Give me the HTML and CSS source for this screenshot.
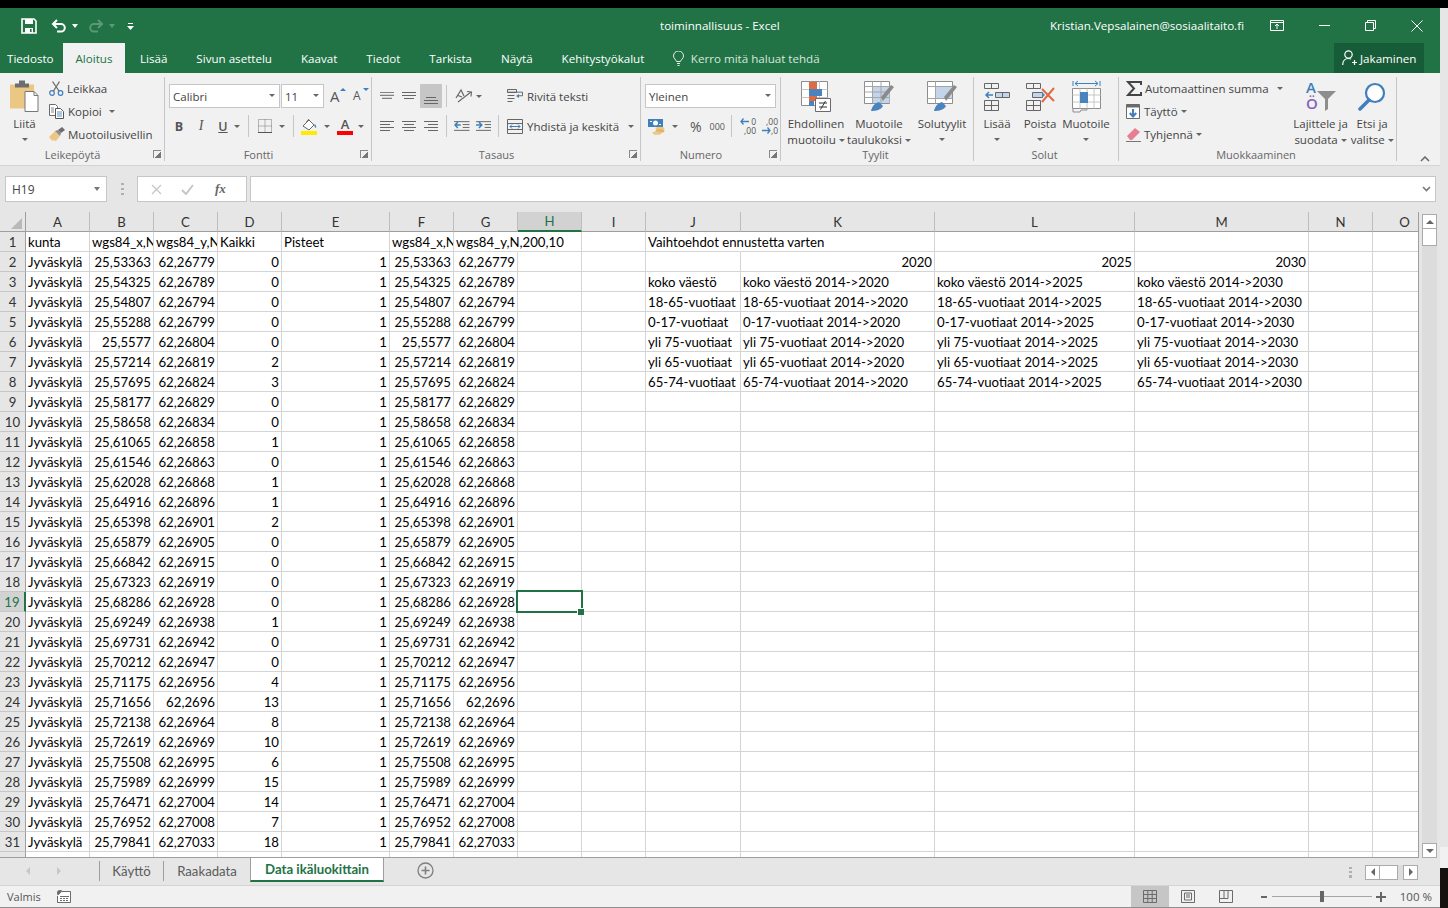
FILE: index.html
```html
<!DOCTYPE html>
<html lang="fi">
<head>
<meta charset="utf-8">
<title>toiminnallisuus - Excel</title>
<link rel="stylesheet" href="styles.css">
</head>
<body>
<div class="topgap"></div>
<div class="screen">
<div class="window">

<header class="titlebar">
  <div class="qat">
    <svg class="q-save" width="16" height="16" viewBox="0 0 16 16"><path d="M1 1h12l2 2v12H1z" fill="none" stroke="#fff" stroke-width="1.6"/><path d="M4 1h8v5H4z" fill="#fff"/><path d="M4 10h8v5H4z" fill="#fff"/><path d="M9 11h1.6v3H9z" fill="#217346"/></svg>
    <svg class="q-undo" width="16" height="14" viewBox="0 0 16 14"><path d="M2 5h8a3.6 3.6 0 0 1 0 7.6H6" fill="none" stroke="#fff" stroke-width="2"/><path d="M6 1 2 5l4 4" fill="none" stroke="#fff" stroke-width="2"/></svg>
    <i class="caret white q-c1"></i>
    <svg class="q-redo" width="16" height="14" viewBox="0 0 16 14"><path d="M14 5H6a3.6 3.6 0 0 0 0 7.6h4" fill="none" stroke="#5d9878" stroke-width="2"/><path d="m10 1 4 4-4 4" fill="none" stroke="#5d9878" stroke-width="2"/></svg>
    <i class="caret dim q-c2"></i>
    <svg class="q-more" width="7" height="8" viewBox="0 0 7 8"><path d="M1 1h5v1H1z" fill="#fff"/><path d="M0 4h7L3.500 8z" fill="#fff"/></svg>
  </div>
  <div class="doc-title">toiminnallisuus - Excel</div>
  <div class="win-right">
    <span class="account">Kristian.Vepsalainen@sosiaalitaito.fi</span>
    <svg class="w-disp" width="14" height="11" viewBox="0 0 14 11"><path d="M.5.500h13v10H.5zM.5 2.500h13" fill="none" stroke="#fff"/><path d="M7 9V4.500M5 6l2-2 2 2" fill="none" stroke="#fff"/></svg>
    <svg class="w-min" width="11" height="11" viewBox="0 0 11 11"><path d="M0 5.500h11" stroke="#fff"/></svg>
    <svg class="w-max" width="11" height="11" viewBox="0 0 11 11"><path d="M.5 2.500h8v8h-8zM2.500 2.500v-2h8v8h-2" fill="none" stroke="#fff"/></svg>
    <svg class="w-close" width="12" height="12" viewBox="0 0 12 12"><path d="m.5.500 11 11M11.500.500l-11 11" stroke="#fff"/></svg>
  </div>
</header>

<nav class="tabs">
  <span class="tab t-file">Tiedosto</span>
  <span class="tab active">Aloitus</span>
  <span class="tab">Lisää</span>
  <span class="tab">Sivun asettelu</span>
  <span class="tab">Kaavat</span>
  <span class="tab">Tiedot</span>
  <span class="tab">Tarkista</span>
  <span class="tab">Näytä</span>
  <span class="tab">Kehitystyökalut</span>
  <span class="tell">
    <svg width="11" height="15" viewBox="0 0 11 15"><path d="M3.500 10.500C3 8.500.5 7.500.5 5a5 5 0 0 1 10 0c0 2.500-2.500 3.500-3 5.500zM4 12.500h3M4.500 14.500h2" fill="none" stroke="#e6efe9"/></svg>
    Kerro mitä haluat tehdä
  </span>
  <span class="share">
    <svg width="15" height="16" viewBox="0 0 15 16"><circle cx="6.500" cy="4.500" r="3.700" fill="none" stroke="#fff" stroke-width="1.200"/><path d="M.7 15c0-4 2.500-6.500 5.800-6.500 1 0 1.800.2 2.500.6M10 12.500h5M12.500 10v5" fill="none" stroke="#fff" stroke-width="1.200"/></svg>
    Jakaminen
  </span>
</nav>

<section class="ribbon">

  <div class="group g-clip">
    <div class="g-body">
      <div class="big b-paste">
        <svg width="30" height="32" viewBox="0 0 30 32"><path d="M0 4h24v24H0z" fill="#ecc683"/><path d="M5 3h4V0h6v3h4v4H5z" fill="#6d6d6d"/><path d="M15 11h9l4 4v16H15z" fill="#fff" stroke="#777"/><path d="M24 11v4h4" fill="none" stroke="#777"/></svg>
        <span>Liitä</span><i class="caret"></i>
      </div>
      <div class="stack s-clip">
        <div class="row"><svg width="15" height="15" viewBox="0 0 15 15"><circle cx="3" cy="12" r="2.300" fill="none" stroke="#3f7fbb" stroke-width="1.200"/><circle cx="11.500" cy="12" r="2.300" fill="none" stroke="#3f7fbb" stroke-width="1.200"/><path d="m4.500 10 6-9.500M10 10 3.500.5" stroke="#6b6b6b" stroke-width="1.300"/></svg><span>Leikkaa</span></div>
        <div class="row"><svg width="16" height="15" viewBox="0 0 16 15"><path d="M.5.500h6l2 2v9h-8z" fill="#fff" stroke="#6b6b6b"/><path d="M6.500 4.500h5l3 3v7h-8z" fill="#fff" stroke="#555"/><path d="M8 8h5M8 10h5M8 12h5" stroke="#5b8fc0"/><path d="M2 4h3M2 6h3M2 8h3" stroke="#888"/></svg><span>Kopioi</span><i class="caret c-kop"></i></div>
        <div class="row"><svg width="16" height="15" viewBox="0 0 16 15"><path d="M0 10 6 4l5 5-4 5c-2 0-2-1-3-1l-1 1c-1-2-2-3-3-4z" fill="#ecc683"/><path d="m6 4 3-1 3 3-1 3z" fill="#8a8a8a"/><path d="m9 3 4-3 3 3-4 3z" fill="#6d6d6d"/></svg><span>Muotoilusivellin</span></div>
      </div>
    </div>
    <div class="g-label"><span>Leikepöytä</span><i class="launch"></i></div>
  </div>

  <div class="group g-font">
    <div class="g-body two">
      <div class="row2 r-font1">
        <span class="combo c-name">Calibri<i class="caret"></i></span>
        <span class="combo c-size">11<i class="caret"></i></span>
        <span class="fs-btn fs-up">A<i class="tip"></i></span>
        <span class="fs-btn fs-down">A<i class="tip down"></i></span>
      </div>
      <div class="row2 r-font2">
        <b class="fmt f-b">B</b><em class="fmt f-i">I</em><u class="fmt f-u">U</u><i class="caret c-u"></i>
        <i class="vsep v1"></i>
        <svg class="i-bord" width="14" height="14" viewBox="0 0 14 14"><path d="M.5.500h13v13H.5zM7 .5v13M.5 7h13" fill="none" stroke="#777" stroke-dasharray="1 1"/><path d="M0 13.500h14" stroke="#555"/></svg><i class="caret c-b"></i>
        <i class="vsep v2"></i>
        <svg class="i-fill" width="17" height="17" viewBox="0 0 17 17"><path d="m2 8 6-6 5 5-5 5z" fill="#fff" stroke="#666"/><path d="M8 1 5.500 4" stroke="#666"/><path d="M13.500 6c1.500 1 2 2.500 1.500 4-1-.5-2-1.500-1.500-4z" fill="#3f7fbb"/><path d="M0 13h16v4H0z" fill="#ffeb00"/></svg><i class="caret c-f"></i>
        <span class="fontcolor">A</span><i class="caret c-c"></i>
      </div>
    </div>
    <div class="g-label"><span>Fontti</span><i class="launch"></i></div>
  </div>

  <div class="group g-align">
    <div class="g-body two">
      <div class="row2 r-al1">
        <svg class="i-al" width="14" height="8" viewBox="0 0 14 8"><path d="M0 .5h14M0 3.500h14M2 6.500h10" stroke="#666" transform="translate(0 -.2)"/></svg>
        <svg class="i-al a2" width="14" height="8" viewBox="0 0 14 8"><path d="M0 .5h14M0 3.500h14M2 6.500h10" stroke="#666"/></svg>
        <span class="al-on"><svg width="14" height="8" viewBox="0 0 14 8"><path d="M2 .5h10M0 3.500h14M0 6.500h14" stroke="#666"/></svg></span>
        <i class="vsep v3"></i>
        <svg class="i-ori" width="18" height="16" viewBox="0 0 18 16"><path d="m1 10 5-8 3 6M3 7.500l4 1.500" fill="none" stroke="#666" stroke-width="1.200"/><path d="M3 14 16 4M12 3.500l4.500.5-.5 4.500" fill="none" stroke="#666" stroke-width="1.100"/></svg><i class="caret c-o"></i>
      </div>
      <div class="row2 r-al2">
        <svg class="i-al" width="14" height="10" viewBox="0 0 14 10"><path d="M0 .5h14M0 3.500h10M0 6.500h14M0 9.500h10" stroke="#666"/></svg>
        <svg class="i-al a2" width="14" height="10" viewBox="0 0 14 10"><path d="M0 .5h14M2 3.500h10M0 6.500h14M2 9.500h10" stroke="#666"/></svg>
        <svg class="i-al a3" width="14" height="10" viewBox="0 0 14 10"><path d="M0 .5h14M4 3.500h10M0 6.500h14M4 9.500h10" stroke="#666"/></svg>
        <i class="vsep v4"></i>
        <svg class="i-ind" width="16" height="12" viewBox="0 0 16 12"><path d="M0 .5h16M9 3.500h7M9 6.500h7M0 9.500h16" stroke="#666" transform="translate(0 1)"/><path d="M7 5H1m3-3L1 5l3 3" fill="none" stroke="#3f7fbb" stroke-width="1.500"/></svg>
        <svg class="i-ind2" width="16" height="12" viewBox="0 0 16 12"><path d="M0 .5h16M9 3.500h7M9 6.500h7M0 9.500h16" stroke="#666" transform="translate(0 1)"/><path d="M0 5h6M3 2l3 3-3 3" fill="none" stroke="#3f7fbb" stroke-width="1.500"/></svg>
        <i class="vsep v5"></i>
      </div>
      <div class="al-text">
        <div class="row"><svg width="16" height="15" viewBox="0 0 16 15"><path d="M.5.500h9v3h-9zM.5 6.500h7M.5 9.500h7M.5 12.500h5" fill="none" stroke="#666"/><path d="M0 3.500h15v4h-4" fill="none" stroke="#666" transform="translate(.5 0) scale(1 .9)"/><path d="m9 7 3-2v4z" fill="#3f7fbb"/></svg><span>Rivitä teksti</span></div>
        <div class="row"><svg width="16" height="15" viewBox="0 0 16 15"><path d="M.5.500h15v14H.5zM.5 4.500h15M.5 10.500h15" fill="none" stroke="#666"/><path d="M3 7.500h10" stroke="#3f7fbb"/><path d="M5 5.500 3 7.500l2 2M11 5.500l2 2-2 2" fill="none" stroke="#3f7fbb"/></svg><span>Yhdistä ja keskitä</span><i class="caret c-m"></i></div>
      </div>
    </div>
    <div class="g-label"><span>Tasaus</span><i class="launch"></i></div>
  </div>

  <div class="group g-num">
    <div class="g-body two">
      <div class="row2 r-n1"><span class="combo c-gen">Yleinen<i class="caret"></i></span></div>
      <div class="row2 r-n2">
        <svg class="i-cur" width="18" height="17" viewBox="0 0 18 17"><path d="M0 1h15v8H0z" fill="#3f7fbb"/><circle cx="7.500" cy="5" r="2.500" fill="#fff"/><path d="M2 3h2v1H2zM11 6h2v1h-2z" fill="#fff"/><ellipse cx="12" cy="10.500" rx="4.500" ry="1.800" fill="#ecc683"/><ellipse cx="12" cy="13" rx="4.500" ry="1.800" fill="#e2b35c"/><ellipse cx="9" cy="15" rx="4.500" ry="1.800" fill="#ecc683"/></svg><i class="caret c-cu"></i>
        <span class="pct">%</span><span class="thou">000</span>
        <i class="vsep v6"></i>
        <span class="dec d1"><svg width="9" height="7" viewBox="0 0 9 7"><path d="M9 3.500H1m2.500-3L1 3.500l2.500 3" fill="none" stroke="#3f7fbb" stroke-width="1.300"/></svg><b>0</b><b class="dl">,00</b></span>
        <span class="dec d2"><b class="dt">,00</b><svg width="9" height="7" viewBox="0 0 9 7"><path d="M0 3.500h8M5.500.5l2.500 3-2.500 3" fill="none" stroke="#3f7fbb" stroke-width="1.300"/></svg><b>,0</b></span>
      </div>
    </div>
    <div class="g-label"><span>Numero</span><i class="launch"></i></div>
  </div>

  <div class="group g-styles">
    <div class="g-body">
      <div class="big b-cf">
        <svg width="31" height="31" viewBox="0 0 31 31"><path d="M.5.500h26v24H.5z" fill="#fff" stroke="#8d8d8d"/><path d="M.5 8.500h26M.5 16.500h26M9.500.5v24M18.500.5v24" stroke="#c6c6c6"/><path d="M8 1h8v7H8z" fill="#df6a43"/><path d="M8 8h13v7H8z" fill="#4b83bf"/><path d="M8 15h8v5H8z" fill="#df6a43"/><path d="M8 20h5v5H8z" fill="#4b83bf"/><path d="M14.500 17.500h15v13h-15z" fill="#fff" stroke="#6b6b6b"/><path d="M18 22h8M18 26h8M24.500 20l-5 8.500" stroke="#333"/></svg>
        <span>Ehdollinen</span><span>muotoilu<i class="caret in"></i></span>
      </div>
      <div class="big b-ft">
        <svg width="31" height="31" viewBox="0 0 31 31"><path d="M.5.500h25v22H.5z" fill="#fff" stroke="#8d8d8d"/><path d="M8.500 5h17v17h-17z" fill="#c3d5ea"/><path d="M.5 5.500h25M.5 11h25M.5 16.500h25M8.500.5v22M17 .5v22" stroke="#a5a5a5"/><path d="m19 20 11-14-3-2-10 12z" fill="#8a8a8a"/><path d="M7 30c1-5 4-8 8-9l4 4c-2 4-7 5-12 5z" fill="#4b83bf"/></svg>
        <span>Muotoile</span><span>taulukoksi<i class="caret in"></i></span>
      </div>
      <div class="big b-cs">
        <svg width="31" height="31" viewBox="0 0 31 31"><path d="M.5.500h25v22H.5z" fill="#fff" stroke="#8d8d8d"/><path d="M8 6h17v11H8z" fill="#c3d5ea"/><path d="M.5 5.500h25M.5 17.500h25M8.500.5v22" stroke="#a5a5a5"/><path d="m19 20 11-14-3-2-10 12z" fill="#8a8a8a"/><path d="M7 30c1-5 4-8 8-9l4 4c-2 4-7 5-12 5z" fill="#4b83bf"/></svg>
        <span>Solutyylit</span><i class="caret"></i>
      </div>
    </div>
    <div class="g-label plain"><span>Tyylit</span></div>
  </div>

  <div class="group g-cells">
    <div class="g-body">
      <div class="big b-ins">
        <svg width="28" height="31" viewBox="0 0 28 31"><path d="M1.500 2.500h14v5h-14zM8.500 2.500v5M1.500 19.500h14v10h-14zM1.500 24.500h14M8.500 19.500v10" fill="none" stroke="#666"/><path d="M12.500 11.500h14v5h-14zM19.500 11.500v5" fill="#c3d5ea" stroke="#666"/><path d="M10 14H3m3-3-3 3 3 3" fill="none" stroke="#3f7fbb" stroke-width="1.500"/></svg>
        <span>Lisää</span><i class="caret"></i>
      </div>
      <div class="big b-del">
        <svg width="31" height="31" viewBox="0 0 31 31"><path d="M1.500 2.500h14v5h-14zM8.500 2.500v5M1.500 19.500h14v10h-14zM1.500 24.500h14M8.500 19.500v10" fill="none" stroke="#666"/><path d="M7.500 11.500h10v5h-10z" fill="#c3d5ea" stroke="#666"/><path d="m17 11 3 3-3 3z" fill="#4b83bf"/><path d="m17 8 12 12M29 7 17 21" stroke="#df6a43" stroke-width="2"/></svg>
        <span>Poista</span><i class="caret"></i>
      </div>
      <div class="big b-fmt">
        <svg width="29" height="33" viewBox="0 0 29 33"><path d="M1 1v5M28 1v5M3 3.500h23" stroke="#3f7fbb"/><path d="m6 1-3 2.500L6 6M23 1l3 2.500L23 6" fill="none" stroke="#3f7fbb"/><path d="M.5 8.500h28v20h-28z" fill="#fff" stroke="#8d8d8d"/><path d="M.5 15h28M.5 22h28M8 8.500v20M15 8.500v20M22 8.500v20" stroke="#c6c6c6"/><path d="M8 12h8v11H8z" fill="#4b83bf"/><path d="M1 29v3h7l1-2h6v-1" fill="none" stroke="#8d8d8d"/></svg>
        <span>Muotoile</span><i class="caret"></i>
      </div>
    </div>
    <div class="g-label plain"><span>Solut</span></div>
  </div>

  <div class="group g-edit">
    <div class="g-body">
      <div class="stack s-edit">
        <div class="row"><svg class="i-sig" width="16" height="15" viewBox="0 0 16 15"><path d="M15 4V1H2l6 6.500L2 14h13v-3" fill="none" stroke="#444" stroke-width="2"/></svg><span>Automaattinen summa</span><i class="caret c-as"></i></div>
        <div class="row"><svg class="i-sig" width="15" height="15" viewBox="0 0 15 15"><path d="M.5.500h13v14H.5z" fill="#fff" stroke="#6b6b6b"/><path d="M.5.500h13v3H.5z" fill="#6b6b6b"/><path d="M7 5v7M3.800 9 7 12.500 10.200 9" fill="none" stroke="#3f7fbb" stroke-width="2"/></svg><span>Täyttö</span><i class="caret in"></i></div>
        <div class="row"><svg class="i-sig" width="15" height="15" viewBox="0 0 15 15"><path d="m1 9 8-8 5 4-8 8H4z" fill="#e77f93"/><path d="M0 14.500h15" stroke="#777"/></svg><span>Tyhjennä</span><i class="caret in"></i></div>
      </div>
      <div class="big b-sort">
        <svg width="31" height="31" viewBox="0 0 31 31"><text x="1" y="12" class="sort-a">A</text><text x="1" y="28" class="sort-o">Ö</text><path d="M12 10h19l-8 8v10l-3 2V18z" fill="#8d8d8d"/></svg>
        <span>Lajittele ja</span><span>suodata<i class="caret in"></i></span>
      </div>
      <div class="big b-find">
        <svg width="28" height="29" viewBox="0 0 28 29"><circle cx="17" cy="11" r="9" fill="#fff" stroke="#3f7fbb" stroke-width="2.200"/><path d="m11 18-9 9" stroke="#3f7fbb" stroke-width="3.500" stroke-linecap="round"/></svg>
        <span>Etsi ja</span><span>valitse<i class="caret in"></i></span>
      </div>
    </div>
    <div class="g-label plain"><span>Muokkaaminen</span></div>
  </div>

  <div class="ribbon-end">
    <svg width="10" height="6" viewBox="0 0 10 6"><path d="m1 5 4-4 4 4" fill="none" stroke="#666" stroke-width="1.500"/></svg>
  </div>
</section>

<div class="formula">
  <div class="namebox">H19<i class="caret"></i></div>
  <div class="fdots"></div>
  <div class="fbtns">
    <svg width="11" height="11" viewBox="0 0 11 11"><path d="m1 1 9 9M10 1l-9 9" stroke="#c6c6c6" stroke-width="1.300"/></svg>
    <svg width="13" height="11" viewBox="0 0 13 11"><path d="m1 6 4 4 7-9" fill="none" stroke="#c6c6c6" stroke-width="2"/></svg>
    <span class="fx">fx</span>
  </div>
  <div class="finput"><svg width="9" height="6" viewBox="0 0 9 6"><path d="m1 1 3.500 3.500L8 1" fill="none" stroke="#777" stroke-width="1.600"/></svg></div>
</div>

<div class="sheet-area">
  <div class="sheet">
    <table>
      <colgroup><col class="c26"><col class="c64"><col class="c64"><col class="c64"><col class="c64"><col class="c108"><col class="c64"><col class="c64"><col class="c64"><col class="c64"><col class="c95"><col class="c194"><col class="c200"><col class="c174"><col class="c64"><col class="c64"></colgroup>
      <thead>
        <tr><th class="corner"><i></i></th><th>A</th><th>B</th><th>C</th><th>D</th><th>E</th><th>F</th><th>G</th><th class="hsel">H</th><th>I</th><th>J</th><th>K</th><th>L</th><th>M</th><th>N</th><th>O</th></tr>
      </thead>
      <tbody>
        <tr><th>1<td>kunta<td class="l">wgs84_x,N<td class="l">wgs84_y,N<td class="l">Kaikki<td class="l">Pisteet<td class="l">wgs84_x,N<td class="l spill">wgs84_y,N,200,10<td><td><td class="spill">Vaihtoehdot ennustetta varten<td><td><td><td><td></tr>
        <tr><th>2<td>Jyväskylä<td>25,53363<td>62,26779<td>0<td>1<td>25,53363<td>62,26779<td><td><td><td class="r">2020<td class="r">2025<td class="r">2030<td><td></tr>
        <tr><th>3<td>Jyväskylä<td>25,54325<td>62,26789<td>0<td>1<td>25,54325<td>62,26789<td><td><td>koko väestö<td>koko väestö 2014-&gt;2020<td>koko väestö 2014-&gt;2025<td>koko väestö 2014-&gt;2030<td><td></tr>
        <tr><th>4<td>Jyväskylä<td>25,54807<td>62,26794<td>0<td>1<td>25,54807<td>62,26794<td><td><td>18-65-vuotiaat<td>18-65-vuotiaat 2014-&gt;2020<td>18-65-vuotiaat 2014-&gt;2025<td>18-65-vuotiaat 2014-&gt;2030<td><td></tr>
        <tr><th>5<td>Jyväskylä<td>25,55288<td>62,26799<td>0<td>1<td>25,55288<td>62,26799<td><td><td>0-17-vuotiaat<td>0-17-vuotiaat 2014-&gt;2020<td>0-17-vuotiaat 2014-&gt;2025<td>0-17-vuotiaat 2014-&gt;2030<td><td></tr>
        <tr><th>6<td>Jyväskylä<td>25,5577<td>62,26804<td>0<td>1<td>25,5577<td>62,26804<td><td><td>yli 75-vuotiaat<td>yli 75-vuotiaat 2014-&gt;2020<td>yli 75-vuotiaat 2014-&gt;2025<td>yli 75-vuotiaat 2014-&gt;2030<td><td></tr>
        <tr><th>7<td>Jyväskylä<td>25,57214<td>62,26819<td>2<td>1<td>25,57214<td>62,26819<td><td><td>yli 65-vuotiaat<td>yli 65-vuotiaat 2014-&gt;2020<td>yli 65-vuotiaat 2014-&gt;2025<td>yli 65-vuotiaat 2014-&gt;2030<td><td></tr>
        <tr><th>8<td>Jyväskylä<td>25,57695<td>62,26824<td>3<td>1<td>25,57695<td>62,26824<td><td><td>65-74-vuotiaat<td>65-74-vuotiaat 2014-&gt;2020<td>65-74-vuotiaat 2014-&gt;2025<td>65-74-vuotiaat 2014-&gt;2030<td><td></tr>
        <tr><th>9<td>Jyväskylä<td>25,58177<td>62,26829<td>0<td>1<td>25,58177<td>62,26829<td><td><td><td><td><td><td><td></tr>
        <tr><th>10<td>Jyväskylä<td>25,58658<td>62,26834<td>0<td>1<td>25,58658<td>62,26834<td><td><td><td><td><td><td><td></tr>
        <tr><th>11<td>Jyväskylä<td>25,61065<td>62,26858<td>1<td>1<td>25,61065<td>62,26858<td><td><td><td><td><td><td><td></tr>
        <tr><th>12<td>Jyväskylä<td>25,61546<td>62,26863<td>0<td>1<td>25,61546<td>62,26863<td><td><td><td><td><td><td><td></tr>
        <tr><th>13<td>Jyväskylä<td>25,62028<td>62,26868<td>1<td>1<td>25,62028<td>62,26868<td><td><td><td><td><td><td><td></tr>
        <tr><th>14<td>Jyväskylä<td>25,64916<td>62,26896<td>1<td>1<td>25,64916<td>62,26896<td><td><td><td><td><td><td><td></tr>
        <tr><th>15<td>Jyväskylä<td>25,65398<td>62,26901<td>2<td>1<td>25,65398<td>62,26901<td><td><td><td><td><td><td><td></tr>
        <tr><th>16<td>Jyväskylä<td>25,65879<td>62,26905<td>0<td>1<td>25,65879<td>62,26905<td><td><td><td><td><td><td><td></tr>
        <tr><th>17<td>Jyväskylä<td>25,66842<td>62,26915<td>0<td>1<td>25,66842<td>62,26915<td><td><td><td><td><td><td><td></tr>
        <tr><th>18<td>Jyväskylä<td>25,67323<td>62,26919<td>0<td>1<td>25,67323<td>62,26919<td><td><td><td><td><td><td><td></tr>
        <tr><th class="rsel">19<td>Jyväskylä<td>25,68286<td>62,26928<td>0<td>1<td>25,68286<td>62,26928<td class="active-cell"><i class="cursor"></i><td><td><td><td><td><td><td></tr>
        <tr><th>20<td>Jyväskylä<td>25,69249<td>62,26938<td>1<td>1<td>25,69249<td>62,26938<td><td><td><td><td><td><td><td></tr>
        <tr><th>21<td>Jyväskylä<td>25,69731<td>62,26942<td>0<td>1<td>25,69731<td>62,26942<td><td><td><td><td><td><td><td></tr>
        <tr><th>22<td>Jyväskylä<td>25,70212<td>62,26947<td>0<td>1<td>25,70212<td>62,26947<td><td><td><td><td><td><td><td></tr>
        <tr><th>23<td>Jyväskylä<td>25,71175<td>62,26956<td>4<td>1<td>25,71175<td>62,26956<td><td><td><td><td><td><td><td></tr>
        <tr><th>24<td>Jyväskylä<td>25,71656<td>62,2696<td>13<td>1<td>25,71656<td>62,2696<td><td><td><td><td><td><td><td></tr>
        <tr><th>25<td>Jyväskylä<td>25,72138<td>62,26964<td>8<td>1<td>25,72138<td>62,26964<td><td><td><td><td><td><td><td></tr>
        <tr><th>26<td>Jyväskylä<td>25,72619<td>62,26969<td>10<td>1<td>25,72619<td>62,26969<td><td><td><td><td><td><td><td></tr>
        <tr><th>27<td>Jyväskylä<td>25,75508<td>62,26995<td>6<td>1<td>25,75508<td>62,26995<td><td><td><td><td><td><td><td></tr>
        <tr><th>28<td>Jyväskylä<td>25,75989<td>62,26999<td>15<td>1<td>25,75989<td>62,26999<td><td><td><td><td><td><td><td></tr>
        <tr><th>29<td>Jyväskylä<td>25,76471<td>62,27004<td>14<td>1<td>25,76471<td>62,27004<td><td><td><td><td><td><td><td></tr>
        <tr><th>30<td>Jyväskylä<td>25,76952<td>62,27008<td>7<td>1<td>25,76952<td>62,27008<td><td><td><td><td><td><td><td></tr>
        <tr><th>31<td>Jyväskylä<td>25,79841<td>62,27033<td>18<td>1<td>25,79841<td>62,27033<td><td><td><td><td><td><td><td></tr>
        <tr><th>32<td><td><td><td><td><td><td><td><td><td><td><td><td><td><td></tr>
      </tbody>
    </table>
  </div>
  <div class="vscroll">
    <div class="sb-btn"><i class="tri-up"></i></div>
    <div class="sb-thumb"></div>
    <div class="sb-track"></div>
    <div class="sb-btn"><i class="tri-down"></i></div>
  </div>
</div>

<div class="sheet-tabs">
  <i class="nav-l"></i><i class="nav-r"></i>
  <span class="stab s-first">Käyttö</span>
  <span class="stab">Raakadata</span>
  <span class="stab on">Data ikäluokittain</span>
  <svg class="addsheet" width="17" height="17" viewBox="0 0 17 17"><circle cx="8.500" cy="8.500" r="7.500" fill="none" stroke="#7f7f7f" stroke-width="1.300"/><path d="M4.500 8.500h8M8.500 4.500v8" stroke="#7f7f7f" stroke-width="1.600"/></svg>
  <div class="hscroll">
    <i class="hdots"></i>
    <div class="hb"><i class="tri-left"></i></div>
    <div class="hthumb"></div>
    <div class="htrack"></div>
    <div class="hb"><i class="tri-right"></i></div>
  </div>
</div>

<footer class="status">
  <span class="ready">Valmis</span>
  <svg class="macro" width="14" height="13" viewBox="0 0 14 13"><circle cx="3" cy="3" r="3" fill="#6b6b6b"/><path d="M5 1.500h8.500v11H.5V6" fill="#fff" stroke="#6b6b6b"/><path d="M3 6h9v1H3zM3 8h2v1H3zM6 8h2v1H6zM9 8h2v1H9zM3 10h2v1H3zM6 10h2v1H6zM9 10h2v1H9z" fill="#6b6b6b"/></svg>
  <div class="views">
    <span class="view on"><svg width="14" height="13" viewBox="0 0 14 13"><path d="M.5.500h13v12H.5zM.5 4.500h13M.5 8.500h13M4.800.5v12M9.200.5v12" fill="none" stroke="#6b6b6b"/></svg></span>
    <span class="view"><svg width="14" height="13" viewBox="0 0 14 13"><path d="M.5.500h13v12H.5z" fill="none" stroke="#6b6b6b"/><path d="M3.500 3h7v7h-7zM5 5h4M5 7h4" fill="none" stroke="#6b6b6b"/></svg></span>
    <span class="view"><svg width="14" height="13" viewBox="0 0 14 13"><path d="M.5.500h13v12H.5zM.5 8.500h8.500V.5" fill="none" stroke="#6b6b6b"/><path d="M5 .5v8" stroke="#6b6b6b"/></svg></span>
    <span class="zm-minus"></span>
    <span class="slider"><i></i></span>
    <span class="zm-plus"></span>
    <span class="zoom">100 %</span>
  </div>
</footer>

</div>
<aside class="strip">
  <div class="strip-a"></div>
  <div class="strip-b"></div>
  <div class="strip-c"></div>
</aside>
</div>
</body>
</html>
```
FILE: styles.css
```css
*{box-sizing:border-box}
html,body{margin:0;padding:0;background:#000;height:908px;overflow:hidden}
body{font-family:"Open Sans","Noto Sans",sans-serif;font-size:11.5px;color:#444}
i{font-style:normal;display:block}
.topgap{height:8px;background:#000}
.screen{display:flex;height:900px}
.window{width:1440px;display:flex;flex-direction:column;background:#f1f1f1}
.strip{width:8px;display:flex;flex-direction:column}
.strip-a{height:839px;background:#e6e6e6}
.strip-b{height:21px;background:#f1f1f1}
.strip-c{flex:1;background:#14110f}

.titlebar{height:35px;background:#217346;display:flex;align-items:center;position:relative;color:#fff;flex:none}
.qat{display:flex;align-items:center;padding-left:21px}
.q-undo{margin-left:14px}
.caret{width:0;height:0;border-left:3.500px solid transparent;border-right:3.500px solid transparent;border-top:4px solid #666;display:block}
.caret.in{display:inline-block;margin-left:3px;vertical-align:2px;border-left-width:3px;border-right-width:3px;border-top-width:3px}
.caret.white{border-top-color:#fff}
.caret.dim{border-top-color:#5d9878}
.q-c1{margin-left:5px}
.q-redo{margin-left:10px}
.q-c2{margin-left:5px}
.q-more{margin-left:12px}
.doc-title{position:absolute;left:660px;font-size:11.600px}
.win-right{margin-left:auto;display:flex;align-items:center}
.account{font-size:11.600px;margin-right:26px}
.w-min{margin-left:35px}
.w-max{margin-left:35px}
.w-close{margin-left:35px;margin-right:17px}

.tabs{height:30px;background:#217346;display:flex;align-items:stretch;color:#fff;font-size:11.600px;flex:none}
.tab{padding:0 14.500px;display:flex;align-items:center;padding-top:1px;white-space:nowrap}
.t-file{padding:0 9px 0 7px;padding-top:1px}
.tab.active{background:#f1f1f1;color:#217346;padding:1px 13px 0;margin-right:0}
.tell{display:flex;align-items:center;gap:7px;margin-left:14px;color:#d8e6dd;padding-top:1px}
.share{margin-left:auto;margin-right:16px;width:90px;background:#175c38;display:flex;align-items:center;gap:3px;padding-left:8px;color:#fff}

.ribbon{height:93px;background:#f1f1f1;border-bottom:1px solid #d4d4d4;display:flex;flex:none;padding-top:4px}
.group{position:relative;display:flex;flex-direction:column;height:84px;border-right:1px solid #c6c6c6}
.g-clip{width:165px}
.g-font{width:207px}
.g-align{width:269px}
.g-num{width:140px}
.g-styles{width:193px}
.g-cells{width:145px}
.g-edit{width:278px}
.g-body{flex:1;display:flex;min-height:0}
.g-body.two{position:relative}
.g-label{height:16px;display:flex;align-items:center;color:#666;font-size:11px;margin-bottom:-1px;flex:none;padding-right:3px}
.g-label span{flex:1;text-align:center;padding-top:1px}
.g-label.plain span{padding-right:0}
.launch{width:8px;height:8px;margin-left:8px;border:1px solid #8a8a8a;border-width:1px 0 0 1px;position:relative;background:linear-gradient(135deg,transparent 55%,#777 55%)}
.row{height:23px;display:flex;align-items:center;white-space:nowrap}
.row svg{flex:none}
.stack{display:flex;flex-direction:column}
.big{display:flex;flex-direction:column;align-items:center;line-height:16px;white-space:nowrap;padding-top:3px}
.big svg{height:33px;flex:none;margin-bottom:3px}
.big>.caret{margin-top:6px;border-left-width:3px;border-right-width:3px;border-top-width:3px}

.b-paste{width:49px}
.s-clip .row span{margin-left:3px}
.s-clip{margin-left:0}
.c-kop{margin-left:7px;border-left-width:3px;border-right-width:3px;border-top-width:3px}

.g-body.two{flex-direction:column;padding-top:7px}
.row2{height:24px;display:flex;align-items:center;flex:none}
.r-font2,.r-al2,.r-n2{margin-top:6px}
.combo{height:24px;background:#fff;border:1px solid #c6c6c6;display:flex;align-items:center;padding-left:3px;position:relative;color:#444}
.combo .caret{position:absolute;right:4px;top:9px;border-left-width:3px;border-right-width:3px;border-top-width:3px}
.c-name{width:111px;margin-left:4px}
.c-size{width:43px;margin-left:1px}
.fs-btn{font-size:15px;color:#555;position:relative;width:16px;text-align:left;line-height:16px}
.fs-up{margin-left:6px}
.fs-down{margin-left:7px;font-size:12px}
.tip{position:absolute;right:0;top:0;width:0;height:0;border-left:3px solid transparent;border-right:3px solid transparent;border-bottom:3px solid #3f7fbb}
.tip.down{border-bottom:0;border-top:3px solid #3f7fbb}
.fmt{width:22px;text-align:center;font-size:12.500px;color:#555;font-style:normal}
.f-b{margin-left:3px;font-weight:700}
.f-i{font-family:"Liberation Serif",serif;font-style:italic;font-size:14px}
.f-u{font-weight:600}
.c-u{margin-left:0;border-left-width:3px;border-right-width:3px;border-top-width:3px}
.vsep{width:1px;height:22px;background:#c6c6c6;flex:none}
.v1{margin-left:8px}
.i-bord{margin-left:9px}
.c-b{margin-left:7px;border-left-width:3px;border-right-width:3px;border-top-width:3px}
.v2{margin-left:8px}
.i-fill{margin-left:7px}
.c-f{margin-left:6px;border-left-width:3px;border-right-width:3px;border-top-width:3px}
.fontcolor{margin-left:7px;width:16px;text-align:center;border-bottom:4px solid #f00;font-size:13px;line-height:14px;font-weight:600;color:#555}
.c-c{margin-left:5px;border-left-width:3px;border-right-width:3px;border-top-width:3px}

.g-align .row2{width:127px}
.al-text{position:absolute;left:135px;top:0;padding-top:7px}
.al-text .row{height:24px;margin-bottom:6px}
.al-text .row span{margin-left:4px}
.c-m{margin-left:9px;border-left-width:3px;border-right-width:3px;border-top-width:3px}
.i-al{margin-left:8px;flex:none}
.a2,.a3{margin-left:8px}
.al-on{width:22px;height:24px;background:#c6c6c6;margin-left:4px;display:flex;align-items:flex-end;justify-content:center;padding-bottom:3px}
.v3{margin-left:4px}
.i-ori{margin-left:8px}
.c-o{margin-left:3px;border-left-width:3px;border-right-width:3px;border-top-width:3px}
.v4{margin-left:8px}
.i-ind{margin-left:7px}
.i-ind2{margin-left:6px}
.v5{margin-left:7px}

.c-gen{width:131px;margin-left:4px}
.i-cur{margin-left:7px}
.c-cu{margin-left:6px;border-left-width:3px;border-right-width:3px;border-top-width:3px}
.pct{margin-left:12px;font-size:14px;color:#555}
.thou{margin-left:8px;font-size:9px;color:#555}
.v6{margin-left:6px}
.dec{position:relative;width:16px;height:18px;display:block;font-size:8.500px;line-height:8px;color:#555;margin-left:8px}
.dec b{font-weight:400;position:absolute;right:0;top:1px}
.dec svg{position:absolute;left:0;top:1px;height:7px}
.dec .dl{top:10px}
.d1 b:not(.dl){right:0}
.d2{margin-left:6px}
.d2 .dt{top:1px}
.d2 svg{top:10px;left:0}
.d2 b:last-child{top:10px}

.g-styles .g-body{padding-left:6px}
.b-cf{width:58px}
.b-ft{width:66px;margin-left:1px}
.b-cs{width:60px}
.g-cells .g-body{padding-left:1px}
.b-ins{width:44px}
.b-del{width:42px}
.b-fmt{width:50px}
.s-edit{margin-left:7px;width:164px}
.s-edit .row span{margin-left:3px}
.s-edit .caret.in{margin-left:3px}
.c-as{margin-left:8px;border-left-width:3px;border-right-width:3px;border-top-width:3px}
.b-sort{width:56px;margin-left:4px}
.b-find{width:48px}
.sort-a{font-size:15px;fill:#3f7fbb;font-weight:600}
.sort-o{font-size:15px;fill:#8462b6;font-weight:600}
.ribbon-end{flex:1;display:flex;justify-content:flex-end;align-items:flex-end;padding:0 10px 3px 0}

.formula{height:46px;background:#e6e6e6;display:flex;align-items:flex-start;padding:10px 0 0 5px;flex:none}
.namebox{width:102px;height:26px;background:#fff;border:1px solid #c6c6c6;font-size:12px;display:flex;align-items:center;justify-content:space-between;padding:0 6px 0 6px;color:#444}
.namebox .caret{border-top-color:#777}
.fdots{width:3px;height:12px;margin:7px 13px 0 14px;background:linear-gradient(#b0b0b0 0 2px,transparent 2px 5px,#b0b0b0 5px 7px,transparent 7px 10px,#b0b0b0 10px 12px)}
.fbtns{width:110px;height:26px;background:#fff;border:1px solid #c6c6c6;display:flex;align-items:center;padding-left:13px;gap:19px}
.fx{font-family:"Liberation Serif",serif;font-style:italic;font-weight:700;font-size:13px;color:#666;margin-left:2px}
.finput{width:1186px;height:26px;margin-left:3px;background:#fff;border:1px solid #c6c6c6;display:flex;align-items:center;justify-content:flex-end;padding-right:4px}

.sheet-area{height:646px;display:flex;flex:none;background:#e6e6e6}
.sheet{width:1419px;height:646px;overflow:hidden;background:#fff;border-right:1px solid #9e9e9e;border-bottom:1px solid #9e9e9e}
table{border-collapse:separate;border-spacing:0;table-layout:fixed;width:1437px;font-family:Lato,"Liberation Sans",sans-serif;font-size:13.200px;color:#000}
.c26{width:26px}.c64{width:64px}.c95{width:95px}.c108{width:108px}.c174{width:174px}.c194{width:194px}.c200{width:200px}
tr{height:20px}
th{font-weight:400;background:#e6e6e6;color:#333;padding:0;text-align:center;overflow:hidden;height:20px;border-right:1px solid #c6c6c6;border-bottom:1px solid #c6c6c6}
thead th{border-bottom:1px solid #9e9e9e;border-right:1px solid #bdbdbd}
tbody th{border-right:1px solid #9e9e9e}
thead .corner{position:relative;border-right:1px solid #9e9e9e}
.corner i{position:absolute;right:3px;bottom:2px;width:0;height:0;border-left:11px solid transparent;border-bottom:11px solid #b9b9b9}
.hsel{background:#d2d2d2;color:#217346;border-bottom:2px solid #217346!important}
tbody .rsel{background:#d2d2d2;color:#217346;border-right:2px solid #217346}
td{padding:0 2px 0 2px;height:20px;white-space:nowrap;overflow:hidden;border-right:1px solid #d4d4d4;border-bottom:1px solid #d4d4d4;text-align:left}
tbody td:nth-child(n+3):nth-child(-n+8){text-align:right}
tbody td.l:nth-child(n+3):nth-child(-n+8){text-align:left}
td.r{text-align:right}
td.spill{overflow:visible;border-right-color:transparent}
.active-cell{position:relative;overflow:visible}
.cursor{position:absolute;left:-2px;top:-2px;width:67px;height:23px;border:2px solid #217346;z-index:2}
.cursor::after{content:"";position:absolute;right:-3px;bottom:-4px;width:6px;height:6px;background:#217346;border:1px solid #fff;border-width:1px 0 0 1px}

.vscroll{width:21px;padding:2px 0 0 3px;display:flex;flex-direction:column;height:646px}
.sb-btn{width:15px;height:15px;background:#fff;border:1px solid #ababab;display:flex;align-items:center;justify-content:center;flex:none}
.sb-thumb{width:15px;height:17px;background:#fff;border:1px solid #ababab;border-top:0;flex:none}
.sb-track{width:15px;flex:1;background:#dcdcdc}
.tri-up{width:0;height:0;border-left:4px solid transparent;border-right:4px solid transparent;border-bottom:4px solid #666}
.tri-down{width:0;height:0;border-left:4px solid transparent;border-right:4px solid transparent;border-top:4px solid #666}
.tri-left{width:0;height:0;border-top:4px solid transparent;border-bottom:4px solid transparent;border-right:4px solid #666}
.tri-right{width:0;height:0;border-top:4px solid transparent;border-bottom:4px solid transparent;border-left:4px solid #666}

.sheet-tabs{height:27px;background:#e6e6e6;display:flex;align-items:flex-start;flex:none;font-family:Lato,"Liberation Sans",sans-serif;font-size:13.200px;color:#5a5a5a}
.nav-l{margin:9px 0 0 26px;width:0;height:0;border-top:4px solid transparent;border-bottom:4px solid transparent;border-right:4px solid #c6c6c6}
.nav-r{margin:9px 0 0 27px;width:0;height:0;border-top:4px solid transparent;border-bottom:4px solid transparent;border-left:4px solid #c6c6c6}
.stab{height:20px;margin-top:3px;border-left:1px solid #9e9e9e;display:flex;align-items:center;justify-content:center;width:64px;white-space:nowrap}
.s-first{margin-left:38px}
.stab:nth-of-type(2){width:87px}
.stab.on{width:134px;height:24px;margin-top:0;background:#fff;border:1px solid #9e9e9e;border-top:0;border-bottom:2px solid #217346;color:#217346;font-weight:700}
.addsheet{margin:4px 0 0 33px}
.hscroll{margin-left:auto;margin-right:22px;display:flex;align-items:center;margin-top:6px;height:16px}
.hdots{width:3px;height:11px;margin-right:13px;background:linear-gradient(#b0b0b0 0 2px,transparent 2px 4px,#b0b0b0 4px 6px,transparent 6px 8px,#b0b0b0 8px 10px)}
.hb{width:15px;height:15px;background:#fff;border:1px solid #ababab;display:flex;align-items:center;justify-content:center}
.hthumb{width:18px;height:15px;background:#fff;border:1px solid #ababab;border-left:0}
.htrack{width:5px;height:15px;background:#dcdcdc}

.status{height:23px;background:#f1f1f1;border-top:1px solid #d4d4d4;border-bottom:1px solid #8f8f8f;display:flex;align-items:center;flex:none;font-size:11px;color:#555}
.ready{margin-left:7px}
.macro{margin-left:16px}
.views{margin-left:auto;display:flex;align-items:center;height:21px}
.view{width:38px;height:21px;display:flex;align-items:center;justify-content:center}
.view.on{background:#c6c6c6}
.zm-minus{width:6px;height:2px;background:#666;margin-left:16px}
.slider{width:100px;height:1px;background:#a5a5a5;margin-left:5px;position:relative}
.slider i{position:absolute;left:48px;top:-5px;width:4px;height:11px;background:#666}
.zm-plus{width:10px;height:10px;margin-left:4px;background:linear-gradient(#666,#666) center/10px 2px no-repeat,linear-gradient(#666,#666) center/2px 10px no-repeat}
.zoom{margin:0 8px 0 14px;font-size:11.500px}
```
